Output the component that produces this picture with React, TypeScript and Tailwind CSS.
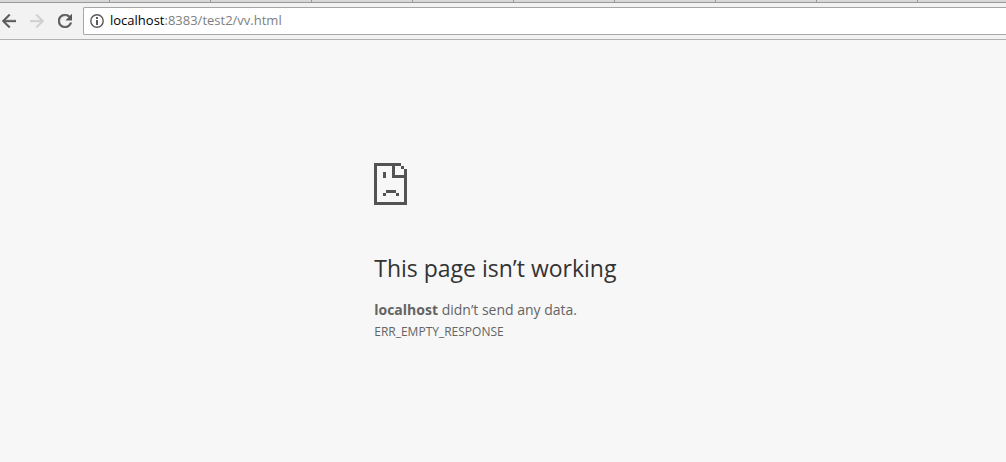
import { useState } from "react";

const tabs = Array.from({ length: 9 }, (_, i) => i);

function BackIcon() {
  return (
    <svg
      viewBox="4 4 16 16"
      className="h-3.5 w-3.5"
      fill="currentColor"
      stroke="currentColor"
      strokeWidth="0.5"
    >
      <path d="M20 11H7.83l5.59-5.59L12 4l-8 8 8 8 1.41-1.41L7.83 13H20v-2z" />
    </svg>
  );
}

function ReloadIcon() {
  return (
    <svg
      viewBox="4 4 16 16"
      className="h-3.5 w-3.5"
      fill="currentColor"
      stroke="currentColor"
      strokeWidth="0.5"
    >
      <path d="M17.65 6.35C16.2 4.9 14.21 4 12 4c-4.42 0-7.99 3.58-7.99 8s3.57 8 7.99 8c3.73 0 6.84-2.55 7.73-6h-2.08c-.82 2.33-3.04 4-5.65 4-3.31 0-6-2.69-6-6s2.69-6 6-6c1.66 0 3.14.69 4.22 1.78L13 11h7V4l-2.35 2.35z" />
    </svg>
  );
}

function InfoIcon() {
  return (
    <svg viewBox="0 0 14 14" className="h-3.5 w-3.5 shrink-0 text-[#5a5a5a]">
      <circle cx="7" cy="7" r="6.2" fill="none" stroke="currentColor" strokeWidth="1.4" />
      <path d="M6 3h2v2H6zM6 6h2v5H6z" fill="currentColor" />
    </svg>
  );
}

function SadPage() {
  return (
    <svg
      viewBox="0 0 33 42"
      className="h-[42px] w-[33px] text-[#535353]"
      fill="currentColor"
      shapeRendering="crispEdges"
    >
      <path
        d="M0 0h27v3h3v3h3v36H0zM3 3v36h27V15H18V3zM21 3v9h9V6h-3V3z"
        fillRule="evenodd"
      />
      <path d="M9 9h3v6H9zM12 27h10v3H12zM9 30h3v3H9zM22 30h3v3h-3z" />
    </svg>
  );
}

function AddressBar() {
  const [url, setUrl] = useState(":8383/test2/vv.html");

  return (
    <label className="flex h-7 min-w-0 flex-1 items-center rounded-l-xs border border-r-0 border-[#a6a6a6] bg-white pl-1.5 text-[13px]">
      <InfoIcon />
      <span className="pl-1.5 text-black">localhost</span>
      <input
        type="text"
        aria-label="Address"
        value={url}
        onChange={(e) => setUrl(e.target.value)}
        className="min-w-0 flex-1 text-[#808080] outline-none"
      />
    </label>
  );
}

export default function App() {
  return (
    <div className="flex min-h-screen flex-col bg-[#f7f7f7] font-['Open_Sans','Noto_Sans',sans-serif]">
      <div className="flex h-[3px] overflow-hidden border-b border-[#999] bg-[#d8d8d8] pl-[9px]">
        {tabs.map((tab) => (
          <div key={tab} className="w-[101px] shrink-0 border-r border-[#999]" />
        ))}
      </div>

      <nav className="flex h-[37px] items-center border-b border-[#b0b0b0] bg-[#f2f2f2]">
        <div className="flex w-[83px] shrink-0 items-center gap-3.5 pl-0.5">
          <button aria-label="Back" className="text-[#5a5a5a]">
            <BackIcon />
          </button>
          <button aria-label="Forward" disabled className="rotate-180 text-[#d0d0d0]">
            <BackIcon />
          </button>
          <button aria-label="Reload" className="text-[#5a5a5a]">
            <ReloadIcon />
          </button>
        </div>
        <AddressBar />
      </nav>

      <main className="ml-[37.2%] pt-[123px] text-[#646464]">
        <SadPage />
        <h1 className="mt-[47px] text-[23px] leading-8 text-[#333]">This page isn’t working</h1>
        <p className="mt-3.5 text-sm leading-6">
          <strong>localhost</strong> didn’t send any data.
        </p>
        <p className="text-xs leading-5">ERR_EMPTY_RESPONSE</p>
      </main>
    </div>
  );
}
